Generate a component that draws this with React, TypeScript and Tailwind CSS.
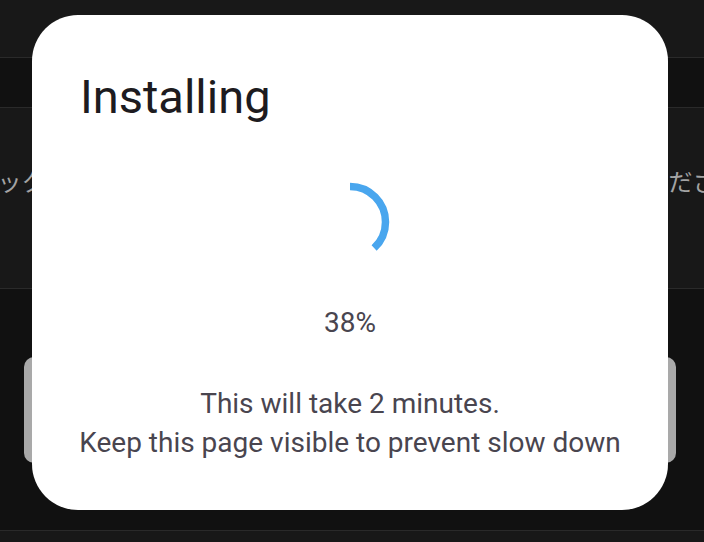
export default function App() {
  const r = 35.5;
  const circ = 2 * Math.PI * r;
  const arc = circ * (137 / 360);

  return (
    <div className="relative h-[542px] w-[704px] overflow-hidden bg-[#111111] font-['Roboto',sans-serif]">
      {/* page behind the dialog */}
      <div className="h-[57px] bg-[#181818]" />
      <div className="h-[51px] border-y border-[#2a2a2a] bg-[#111111]" />
      <div className="flex h-[180px] justify-center overflow-hidden bg-[#181818] pt-[57px]">
        <span className="ml-[10px] shrink-0 whitespace-nowrap font-['Noto_Sans_CJK_JP',sans-serif] text-[24px] leading-[32px] text-[#a3a3a3]">
          リックしてアプリのインストールが完了するまで画面でお待ちください
        </span>
      </div>
      <div className="h-[243px] border-y border-[#2a2a2a] bg-[#111111] pl-[24px] pr-[28px] pt-[68px]">
        <div className="h-[106px] rounded-[10px] bg-[#a9a9a9]" />
      </div>
      <div className="h-[11px] bg-[#181818]" />

      {/* dialog */}
      <div className="absolute left-[32px] top-[15px] flex h-[495px] w-[636px] flex-col rounded-[46px] bg-white px-[40px] pt-[54px]">
        <h2 className="pl-[8px] text-[47px] leading-[55px] font-normal text-[#1d1b20]">Installing</h2>
        <div className="mt-[58px] flex justify-center">
          <svg width="80" height="80" viewBox="0 0 80 80" className="-rotate-90">
            <circle
              cx="40"
              cy="40"
              r={r}
              fill="none"
              stroke="#49a6ee"
              strokeWidth="7.5"
              strokeDasharray={`${arc} ${circ}`}
            />
          </svg>
        </div>
        <p className="mt-[41px] text-center text-[28px] leading-[39px] text-[#49454f]">38%</p>
        <div className="mt-[42px] text-center text-[28px] leading-[39px] text-[#49454f]">
          <p>This will take 2 minutes.</p>
          <p>Keep this page visible to prevent slow down</p>
        </div>
      </div>
    </div>
  );
}
